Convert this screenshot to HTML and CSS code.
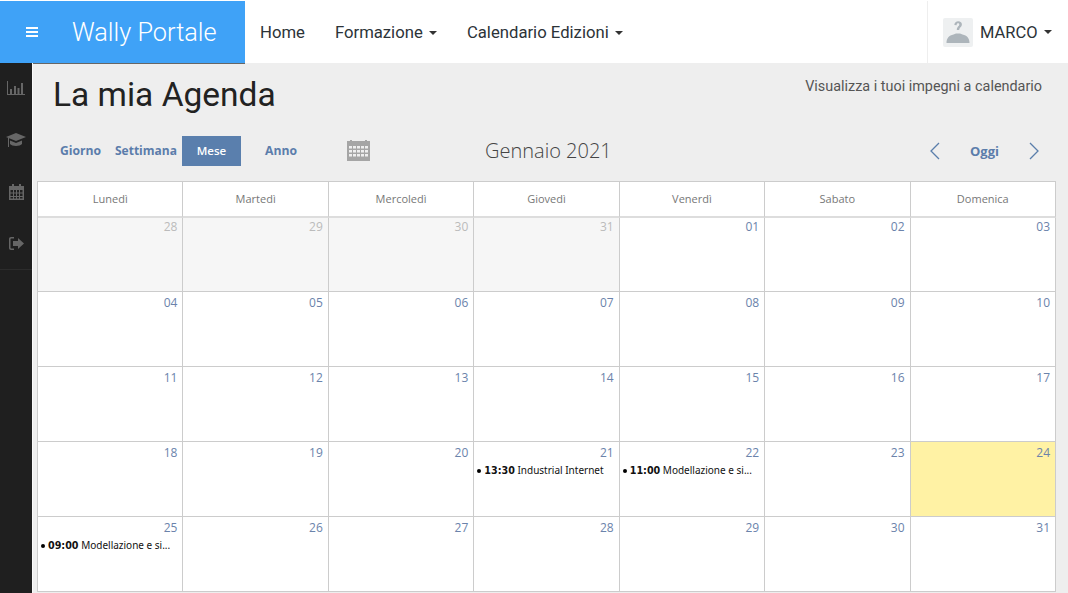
FILE: index.html
```html
<!DOCTYPE html>
<html lang="it">
<head>
<meta charset="utf-8">
<title>La mia Agenda</title>
<link rel="stylesheet" href="styles.css">
</head>
<body>
<header class="navbar">
  <div class="brand">
    <span class="burger"><i></i><i></i><i></i></span>
    <span class="brand-name">Wally Portale</span>
  </div>
  <nav class="menu">
    <a>Home</a>
    <a>Formazione <b class="caret"></b></a>
    <a>Calendario Edizioni <b class="caret"></b></a>
  </nav>
  <div class="user">
    <svg class="avatar" width="30" height="29" viewBox="0 0 30 29"><rect width="30" height="29" rx="2" fill="#eef0f1"/><path d="M3.500 25c0-5 2.500-7.500 7-8.500l2.500-1h4l2.500 1c4.500 1 7 3.500 7 8.500z" fill="#adb5bb"/><path d="M11.300 7c.3-2.600 1.900-3.700 3.900-3.700 2.300 0 3.700 1.300 3.700 3.100 0 2.600-2.700 2.800-2.700 5.600h-2.400c0-3.400 2.500-3.600 2.500-5.400 0-.8-.5-1.300-1.200-1.300-.9 0-1.400.6-1.500 1.900z" fill="#adb5bb"/></svg>
    <span>MARCO</span><b class="caret"></b>
  </div>
</header>
<div class="layout">
  <aside class="sidebar">
    <svg width="18" height="14" viewBox="0 0 18 14" class="side-icon"><path d="M0 0h1v13h17v1H0z"/><path d="M3 8h2v5H3zM7 5h2v8H7zM10.500 7h2v6h-2zM14 2h2v11h-2z"/></svg>
    <svg width="20" height="16" viewBox="0 0 20 16" class="side-icon"><path d="M10 1 0 5l10 4 10-4z"/><path d="M4 8.500V12c2 2.500 10 2.500 12 0V8.500L10 11z"/><path d="M2 6h1v9H2z"/></svg>
    <svg width="15" height="16" viewBox="0 0 15 16" class="side-icon"><path fill-rule="evenodd" d="M3 0h2v2h5V0h2v2h3v14H0V2h3zM1.500 6v2.500h2.500V6zm3.500 0v2.500h2V6zm3 0v2.500h2V6zm3 0v2.500h2.500V6zM1.500 9.500v2.500h2.500V9.500zm3.500 0v2.500h2V9.500zm3 0v2.500h2V9.500zm3 0v2.500h2.500V9.500zM1.500 13v1.500h2.500V13zm3.500 0v1.500h2V13zm3 0v1.500h2V13zm3 0v1.500h2.500V13z"/></svg>
    <svg width="15" height="13" viewBox="0 0 15 13" class="side-icon"><path d="M5 0H2C.8 0 0 .8 0 2v9c0 1.200.8 2 2 2h3v-1.500H2.500c-.6 0-1-.4-1-1v-8c0-.6.4-1 1-1H5z"/><path d="M9 1l6 5.500L9 12V9H4V4h5z"/></svg>
    <div class="side-rule"></div>
  </aside>
  <main class="content">
    <div class="page-head">
      <h1>La mia Agenda</h1>
      <p>Visualizza i tuoi impegni a calendario</p>
    </div>
    <div class="toolbar">
      <div class="views">
        <a class="view v-giorno">Giorno</a>
        <a class="view v-sett">Settimana</a>
        <a class="view v-mese active">Mese</a>
        <a class="view v-anno">Anno</a>
      </div>
      <svg class="cal-icon" width="23" height="21" viewBox="0 0 23 21"><path fill-rule="evenodd" d="M0 1h3V0h2v1h13V0h2v1h3v20H0zM2 6v2.500h3V6zm4 0v2.500h3V6zm4 0v2.500h3V6zm4 0v2.500h3V6zm4 0v2.500h3V6zM2 10v2.500h3V10zm4 0v2.500h3V10zm4 0v2.500h3V10zm4 0v2.500h3V10zm4 0v2.500h3V10zM2 14v2.500h3V14zm4 0v2.500h3V14zm4 0v2.500h3V14zm4 0v2.500h3V14zm4 0v2.500h3V14z"/></svg>
      <div class="month-title">Gennaio 2021</div>
      <div class="pager">
        <svg width="11" height="18" viewBox="0 0 11 18"><path d="M10 1 2 9l8 8" fill="none" stroke="#5a7eab" stroke-width="1.300"/></svg>
        <a class="today">Oggi</a>
        <svg width="11" height="18" viewBox="0 0 11 18"><path d="m1 1 8 8-8 8" fill="none" stroke="#5a7eab" stroke-width="1.300"/></svg>
      </div>
    </div>
    <div class="calendar">
      <div class="head">Lunedì</div><div class="head">Martedì</div><div class="head">Mercoledì</div><div class="head">Giovedì</div><div class="head">Venerdì</div><div class="head">Sabato</div><div class="head">Domenica</div>
      <div class="day off">28</div><div class="day off">29</div><div class="day off">30</div><div class="day off">31</div><div class="day">01</div><div class="day">02</div><div class="day">03</div>
      <div class="day">04</div><div class="day">05</div><div class="day">06</div><div class="day">07</div><div class="day">08</div><div class="day">09</div><div class="day">10</div>
      <div class="day">11</div><div class="day">12</div><div class="day">13</div><div class="day">14</div><div class="day">15</div><div class="day">16</div><div class="day">17</div>
      <div class="day">18</div><div class="day">19</div><div class="day">20</div>
      <div class="day">21<div class="event"><strong>13:30</strong> Industrial Internet</div></div>
      <div class="day">22<div class="event"><strong>11:00</strong> Modellazione e si...</div></div>
      <div class="day">23</div><div class="day now">24</div>
      <div class="day">25<div class="event"><strong>09:00</strong> Modellazione e si...</div></div>
      <div class="day">26</div><div class="day">27</div><div class="day">28</div><div class="day">29</div><div class="day">30</div><div class="day">31</div>
    </div>
  </main>
</div>
</body>
</html>
```
FILE: styles.css
```css
* { box-sizing: border-box; }
html, body { margin: 0; height: 593px; overflow: hidden; }
body { font-family: Roboto, sans-serif; background: #eee; color: #222; }
.navbar { display: flex; height: 63px; background: #fff; padding-top: 1px; }
.brand { width: 245px; background: #3fa2f7; display: flex; align-items: center; color: #fff; box-shadow: 0 1px 0 #666; }
.burger { width: 12px; margin-left: 26px; display: flex; flex-direction: column; gap: 2px; }
.burger i { display: block; height: 2px; background: #fff; }
.brand-name { margin-left: 34px; font-size: 25.3px; font-weight: 300; }
.menu { display: flex; flex: 1; align-items: center; gap: 30px; padding-left: 15px; font-size: 16.700px; color: #2c3338; }
.caret { display: inline-block; width: 0; height: 0; margin-left: 2px; vertical-align: middle; border-top: 4px solid #333; border-left: 4px solid transparent; border-right: 4px solid transparent; }
.user { width: 141px; border-left: 1px solid #eee; display: flex; align-items: center; padding-left: 15px; font-size: 16.500px; color: #2c3338; }
.user span { margin-left: 7px; margin-right: 4px; }
.layout { display: flex; height: 530px; }
.sidebar { position: relative; width: 33px; background: #1f1f1f; border-right: 1px solid #fafafa; display: flex; flex-direction: column; align-items: center; padding-top: 18px; gap: 36.500px; }
.side-icon { fill: #666; }
.side-rule { position: absolute; left: 0; right: 0; top: 206px; height: 1px; background: #2c2c2c; }
.content { flex: 1; padding: 0 12px 0 4px; min-width: 0; }
.page-head { display: flex; justify-content: space-between; height: 64px; padding: 14px 14px 0 16px; }
h1 { margin: 0; font-size: 33.500px; line-height: 36px; font-weight: 400; color: #222; }
.page-head p { margin: 0; padding-top: 1px; font-size: 14.400px; line-height: 18px; color: #555; }
.toolbar { display: flex; align-items: center; height: 47px; margin-bottom: 7px; }
.views { display: flex; width: 310px; height: 30px; align-items: center; font-family: "Open Sans", sans-serif; font-size: 12.200px; font-weight: 700; color: #5b7dab; }
.view { display: block; text-align: center; line-height: 30px; }
.v-giorno { width: 78px; padding-left: 9px; }
.v-sett { width: 67px; font-size: 12px; text-align: left; white-space: nowrap; }
.v-mese { width: 59px; background: #5a7fad; color: #fff; font-size: 11.500px; font-weight: 600; }
.v-anno { width: 80px; }
.cal-icon { fill: #a5a5a5; }
.month-title { margin-left: 115px; font-family: "Open Sans", sans-serif; font-size: 20px; font-weight: 300; color: #444; width: 444px; }
.pager { display: flex; align-items: center; gap: 30px; font-family: "Open Sans", sans-serif; font-size: 13px; font-weight: 700; color: #5b7dab; }
.calendar { display: grid; grid-template-columns: repeat(7, 1fr); grid-template-rows: 36px 74px repeat(4, 75px); border-top: 1px solid #ccc; border-left: 1px solid #ccc; background: #fff; width: 1019px; }
.head { border-right: 1px solid #ccc; border-bottom: 2px solid #ddd; text-align: center; font-family: "Open Sans", sans-serif; font-size: 11px; line-height: 34px; color: #777; }
.day { border-right: 1px solid #ccc; border-bottom: 1px solid #ccc; padding: 2px 5px 0 4px; text-align: right; font-family: "Open Sans", sans-serif; font-size: 12px; line-height: 17px; color: #6b83ab; min-width: 0; }
.day:nth-child(-n+14) { padding-top: 0; }
.off { background: #f6f6f6; color: #bbb; }
.now { background: #fff2a4; }
.event { margin: 2px 0 0 -2px; text-align: left; font-family: "Noto Sans", sans-serif; font-size: 10px; line-height: 14px; color: #111; white-space: nowrap; overflow: hidden; }
.event strong { font-family: "DejaVu Sans", sans-serif; font-size: 9.600px; }
.event::before { content: ""; display: inline-block; width: 4px; height: 4px; border-radius: 50%; background: #000; margin: 0 3px 1px 1px; vertical-align: middle; }
```
